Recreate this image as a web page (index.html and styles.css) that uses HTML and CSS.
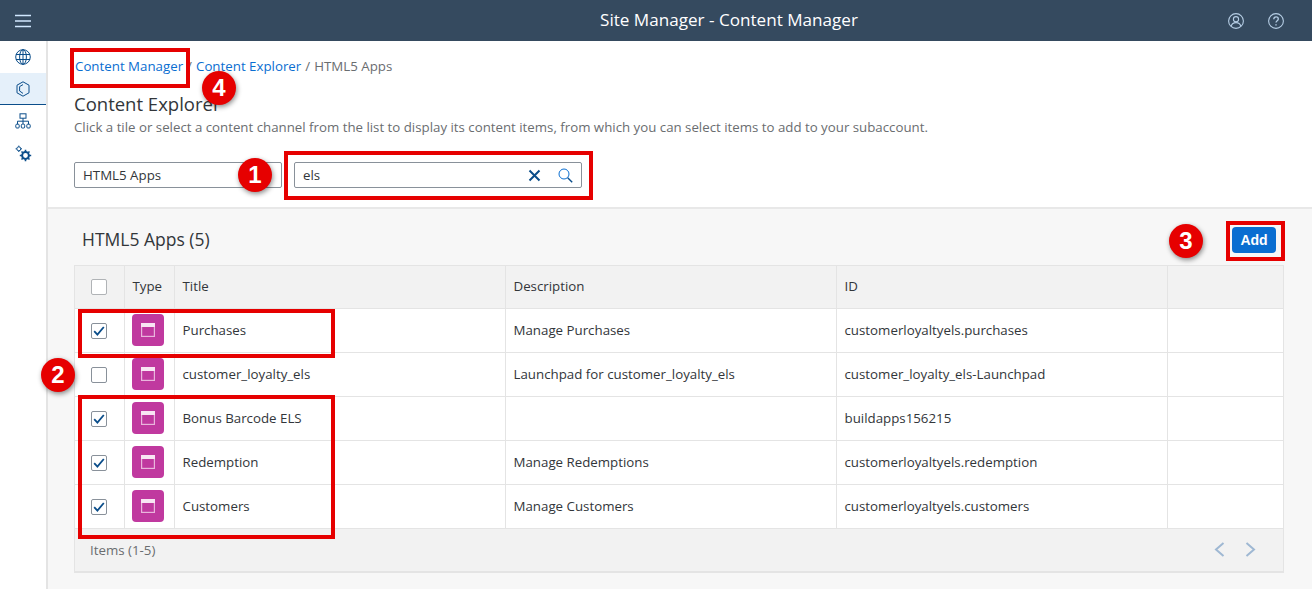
FILE: index.html
```html
<!DOCTYPE html>
<html lang="en">
<head>
    <meta charset="UTF-8">
    <title>Site Manager - Content Manager</title>
    <link rel="stylesheet" href="styles.css">
</head>
<body>
    <header class="shell-bar">
        <button class="shell-btn menu-btn" aria-label="Menu">
            <svg width="16" height="14" viewBox="0 0 16 14"><path d="M0 1.500h16M0 7h16M0 12.500h16" stroke="#d1e8ff" stroke-width="1.600"/></svg>
        </button>
        <div class="shell-title">Site Manager - Content Manager</div>
        <div class="shell-actions">
            <svg width="16" height="16" viewBox="0 0 16 16" fill="none" stroke="#b5cde4" stroke-width="1.100"><circle cx="8" cy="8" r="7.400"/><circle cx="8" cy="6.200" r="2.600"/><path d="M3.200 13.200c.6-2.400 2.400-3.600 4.800-3.600s4.200 1.200 4.800 3.600"/></svg>
            <svg width="16" height="16" viewBox="0 0 16 16" fill="none" stroke="#b5cde4" stroke-width="1.100"><circle cx="8" cy="8" r="7.400"/><path d="M5.800 6.200c0-1.400 1-2.300 2.300-2.300s2.200.9 2.200 2c0 1.800-2.300 1.800-2.300 3.700" stroke-width="1.300"/><path d="M8 11.200v1.300" stroke-width="1.400"/></svg>
        </div>
    </header>

    <div class="page">
        <nav class="side-nav">
            <div class="nav-item">
                <svg width="16" height="16" viewBox="0 0 16 16" fill="none" stroke="#0a4d8a" stroke-width="1"><circle cx="8" cy="8" r="7.300"/><ellipse cx="8" cy="8" rx="3.400" ry="7.300"/><path d="M1 5.500h14M1 10.500h14M8 .7v14.600"/></svg>
            </div>
            <div class="nav-item active">
                <svg width="14" height="16" viewBox="0 0 14 16" fill="none" stroke="#0a4d8a" stroke-width="1"><path d="M7 .8l6 3.400v7.600l-6 3.400-6-3.400V4.200z"/><path d="M3.600 5.600 7 3.600M3.600 5.600V10L7 12.400"/></svg>
            </div>
            <div class="nav-item">
                <svg width="16" height="16" viewBox="0 0 16 16" fill="none" stroke="#0a4d8a" stroke-width="1"><rect x="5" y=".8" width="6" height="4.400"/><path d="M8 5.200v3M2.500 11V8.200h11V11M8 8.200V11"/><rect x=".8" y="11.200" width="3.400" height="3.800" rx="1"/><rect x="6.300" y="11.200" width="3.400" height="3.800" rx="1"/><rect x="11.800" y="11.200" width="3.400" height="3.800" rx="1"/></svg>
            </div>
            <div class="nav-item">
                <svg width="17" height="17" viewBox="0 0 17 17" fill="none" stroke="#0a4d8a"><circle cx="3.800" cy="3.800" r="2" stroke-width="1"/><path d="M3.800.6v1.200M3.800 5.800V7M.6 3.800h1.200M5.800 3.800H7" stroke-width="1"/><circle cx="10.500" cy="10.500" r="3.400" stroke-width="2"/><path d="M10.500 4.800v2M10.500 14.200v2M4.800 10.500h2M14.200 10.500h2M6.500 6.500l1.300 1.300M13.200 13.200l1.300 1.300M6.500 14.500l1.300-1.300M13.200 7.800l1.300-1.300" stroke-width="1.600"/></svg>
            </div>
        </nav>

        <main class="content">
            <section class="top-section">
                <div class="breadcrumb">
                    <a>Content Manager</a><span class="sep">/</span><a>Content Explorer</a><span class="sep">/</span><span>HTML5 Apps</span>
                </div>
                <h1 class="page-title">Content Explorer</h1>
                <p class="page-desc">Click a tile or select a content channel from the list to display its content items, from which you can select items to add to your subaccount.</p>
                <div class="filters">
                    <div class="field select-field">HTML5 Apps</div>
                    <div class="field search-field">
                        <span class="search-value">els</span>
                        <svg width="13" height="13" viewBox="0 0 13 13"><path d="M1.500 1.500l10 10M11.500 1.500l-10 10" stroke="#0a4d8a" stroke-width="2"/></svg>
                        <svg width="15" height="15" viewBox="0 0 15 15" fill="none" stroke="#0a6ed1" stroke-width="1"><circle cx="6" cy="6" r="5"/><path d="M9.700 9.700l4.500 4.500" stroke="#0a4d8a" stroke-width="1.400"/></svg>
                    </div>
                </div>
            </section>

            <section class="list-section">
                <div class="list-head">
                    <h2 class="list-title">HTML5 Apps (5)</h2>
                    <button class="add-btn">Add</button>
                </div>
                <div class="table-wrap">
                    <table class="items">
                        <colgroup>
                            <col class="col-check"><col class="col-type"><col class="col-text"><col class="col-text"><col class="col-text"><col>
                        </colgroup>
                        <thead>
                            <tr>
                                <th><span class="check check-head"></span></th>
                                <th>Type</th>
                                <th>Title</th>
                                <th>Description</th>
                                <th>ID</th>
                                <th></th>
                            </tr>
                        </thead>
                        <tbody id="rows"></tbody>
                    </table>
                    <div class="table-foot">
                        <span>Items (1-5)</span>
                        <div class="pager">
                            <svg width="11" height="15" viewBox="0 0 11 15" fill="none" stroke="#9fb8d3" stroke-width="2"><path d="M9.500 1 2 7.500 9.500 14"/></svg>
                            <svg width="11" height="15" viewBox="0 0 11 15" fill="none" stroke="#9fb8d3" stroke-width="2"><path d="M1.500 1 9 7.500 1.500 14"/></svg>
                        </div>
                    </div>
                </div>
            </section>
        </main>
    </div>

    <!-- callouts drawn on top of the screenshot -->
    <div class="frame frame-crumb"></div>
    <div class="frame frame-search"></div>
    <div class="frame frame-add"></div>
    <div class="frame frame-row"></div>
    <div class="frame frame-rows"></div>
    <div class="badge badge-1">1</div>
    <div class="badge badge-2">2</div>
    <div class="badge badge-3">3</div>
    <div class="badge badge-4">4</div>

    <script>
        const items = [
            { checked: true, title: 'Purchases', desc: 'Manage Purchases', id: 'customerloyaltyels.purchases' },
            { checked: false, title: 'customer_loyalty_els', desc: 'Launchpad for customer_loyalty_els', id: 'customer_loyalty_els-Launchpad' },
            { checked: true, title: 'Bonus Barcode ELS', desc: '', id: 'buildapps156215' },
            { checked: true, title: 'Redemption', desc: 'Manage Redemptions', id: 'customerloyaltyels.redemption' },
            { checked: true, title: 'Customers', desc: 'Manage Customers', id: 'customerloyaltyels.customers' }
        ];
        const tick = '<svg width="12" height="10" viewBox="0 0 12 10" fill="none"><path d="M1.200 5.200 4.400 8.600 10.800 1" stroke="#0a4d8a" stroke-width="1.800"/></svg>';
        const appIcon = '<span class="app-icon"><svg width="14" height="14" viewBox="0 0 14 14"><rect x=".6" y=".6" width="12.800" height="12.800" fill="none" stroke="#e9b5dc" stroke-width="1.200"/><rect x="0" y="0" width="14" height="4" fill="#f8e6f3"/></svg></span>';
        document.getElementById('rows').innerHTML = items.map(item => `
            <tr>
                <td class="center"><span class="check">${item.checked ? tick : ''}</span></td>
                <td class="center">${appIcon}</td>
                <td>${item.title}</td>
                <td>${item.desc}</td>
                <td>${item.id}</td>
                <td></td>
            </tr>`).join('');
    </script>
</body>
</html>
```

FILE: styles.css
```css
* {
    box-sizing: border-box;
}
body {
    margin: 0;
    height: 589px;
    overflow: hidden;
    position: relative;
    background-color: #ffffff;
    color: #32363a;
    font-family: "Open Sans", Arial, sans-serif;
    font-size: 13.3px;
}
.shell-bar {
    height: 41px;
    background-color: #354a5f;
    display: flex;
    align-items: center;
    padding: 0 28px 0 15px;
}
.shell-btn {
    background: none;
    border: none;
    padding: 0;
    display: flex;
}
.shell-title {
    flex: 1;
    text-align: center;
    color: #ffffff;
    font-size: 17.1px;
    padding-left: 199px;
    padding-bottom: 3px;
}
.shell-actions {
    display: flex;
    gap: 24px;
}
.page {
    display: flex;
    height: 548px;
}
.side-nav {
    width: 48px;
    flex-shrink: 0;
    border-right: 2px solid #e4e4e4;
}
.nav-item {
    height: 32px;
    display: flex;
    align-items: center;
    justify-content: center;
}
.nav-item.active {
    background-color: #e5f0fa;
    border-bottom: 1px solid #0a4d8a;
}
.content {
    flex: 1;
    display: flex;
    flex-direction: column;
}
.top-section {
    height: 168px;
    padding: 16px 0 0 26px;
    border-bottom: 2px solid #e8e8e8;
}
.breadcrumb {
    line-height: 18px;
    color: #6a6d70;
    padding-left: 1px;
}
.breadcrumb a {
    color: #0a6ed1;
}
.sep {
    margin: 0 4px;
}
.page-title {
    margin: 16px 0 0;
    font-size: 18.5px;
    font-weight: 400;
    line-height: 26px;
}
.page-desc {
    margin: 1px 0 0;
    color: #6a6d70;
    line-height: 18px;
    font-size: 13.27px;
}
.filters {
    display: flex;
    gap: 12px;
    margin-top: 26px;
}
.field {
    height: 26px;
    border: 1px solid #89919a;
    border-radius: 2px;
    display: flex;
    align-items: center;
    padding: 0 8px;
}
.select-field {
    width: 208px;
}
.search-field {
    width: 288px;
    gap: 17px;
}
.search-value {
    flex: 1;
}
.list-section {
    flex: 1;
    background-color: #f7f7f7;
    padding: 0 28px 0 26px;
}
.list-head {
    height: 56px;
    display: flex;
    align-items: center;
    justify-content: space-between;
    padding: 6px 8px 0 8px;
}
.list-title {
    margin: 0 0 2px;
    font-size: 17.5px;
    font-weight: 400;
}
.add-btn {
    width: 44px;
    height: 26px;
    background-color: #0a6ed1;
    color: #ffffff;
    border: none;
    border-radius: 4px;
    font-family: "Liberation Sans", Arial, sans-serif;
    font-size: 14px;
    font-weight: 700;
    padding: 0;
}
.table-wrap {
    border: 1px solid #e4e4e4;
    border-bottom-width: 2px;
}
.items {
    width: 100%;
    border-collapse: collapse;
    table-layout: fixed;
}
.col-check {
    width: 49px;
}
.col-type {
    width: 50px;
}
.col-text {
    width: 331px;
}
th,
td {
    border: 1px solid #e4e4e4;
    padding: 0 8px;
    text-align: left;
    font-weight: 400;
    white-space: nowrap;
}
th:first-child,
td:first-child {
    border-left: none;
}
th:last-child,
td:last-child {
    border-right: none;
}
thead tr:first-child th {
    border-top: none;
}
th {
    height: 42px;
    padding-bottom: 2px;
    background-color: #f2f2f2;
    color: #32363a;
}
td {
    height: 44px;
    background-color: #ffffff;
}
.center,
th:first-child {
    text-align: center;
    padding-left: 0;
    padding-right: 0;
}
.check {
    display: inline-flex;
    align-items: center;
    justify-content: center;
    vertical-align: middle;
    width: 16px;
    height: 16px;
    border: 1px solid #89919a;
    border-radius: 2px;
    background-color: #ffffff;
}
.check-head {
    border-color: #b0b3b6;
}
.app-icon {
    display: inline-flex;
    align-items: center;
    justify-content: center;
    vertical-align: middle;
    width: 32px;
    height: 32px;
    margin-right: 2px;
    border-radius: 4px;
    background-color: #c0399f;
}
.table-foot {
    height: 42px;
    background-color: #f2f2f2;
    display: flex;
    align-items: center;
    justify-content: space-between;
    padding: 0 27px 0 15px;
    color: #6a6d70;
}
.pager {
    display: flex;
    gap: 20px;
}

/* callouts */
.frame {
    position: absolute;
    border: 4px solid #e60000;
}
.frame-crumb {
    left: 70px;
    top: 48px;
    width: 120px;
    height: 40px;
}
.frame-search {
    left: 284px;
    top: 151px;
    width: 309px;
    height: 49px;
}
.frame-add {
    left: 1226px;
    top: 221px;
    width: 59px;
    height: 40px;
}
.frame-row {
    left: 78px;
    top: 309px;
    width: 257px;
    height: 49px;
}
.frame-rows {
    left: 78px;
    top: 395px;
    width: 257px;
    height: 144px;
}
.badge {
    position: absolute;
    width: 34px;
    height: 34px;
    border-radius: 50%;
    background-color: #e60000;
    color: #ffffff;
    font-family: "Liberation Sans", Arial, sans-serif;
    font-size: 24px;
    font-weight: 700;
    display: flex;
    align-items: center;
    justify-content: center;
    box-shadow: 1px 2px 5px rgba(0, 0, 0, 0.45);
}
.badge-1 {
    left: 238px;
    top: 158px;
}
.badge-2 {
    left: 41px;
    top: 358px;
}
.badge-3 {
    left: 1169px;
    top: 224px;
}
.badge-4 {
    left: 202px;
    top: 71px;
}
```
